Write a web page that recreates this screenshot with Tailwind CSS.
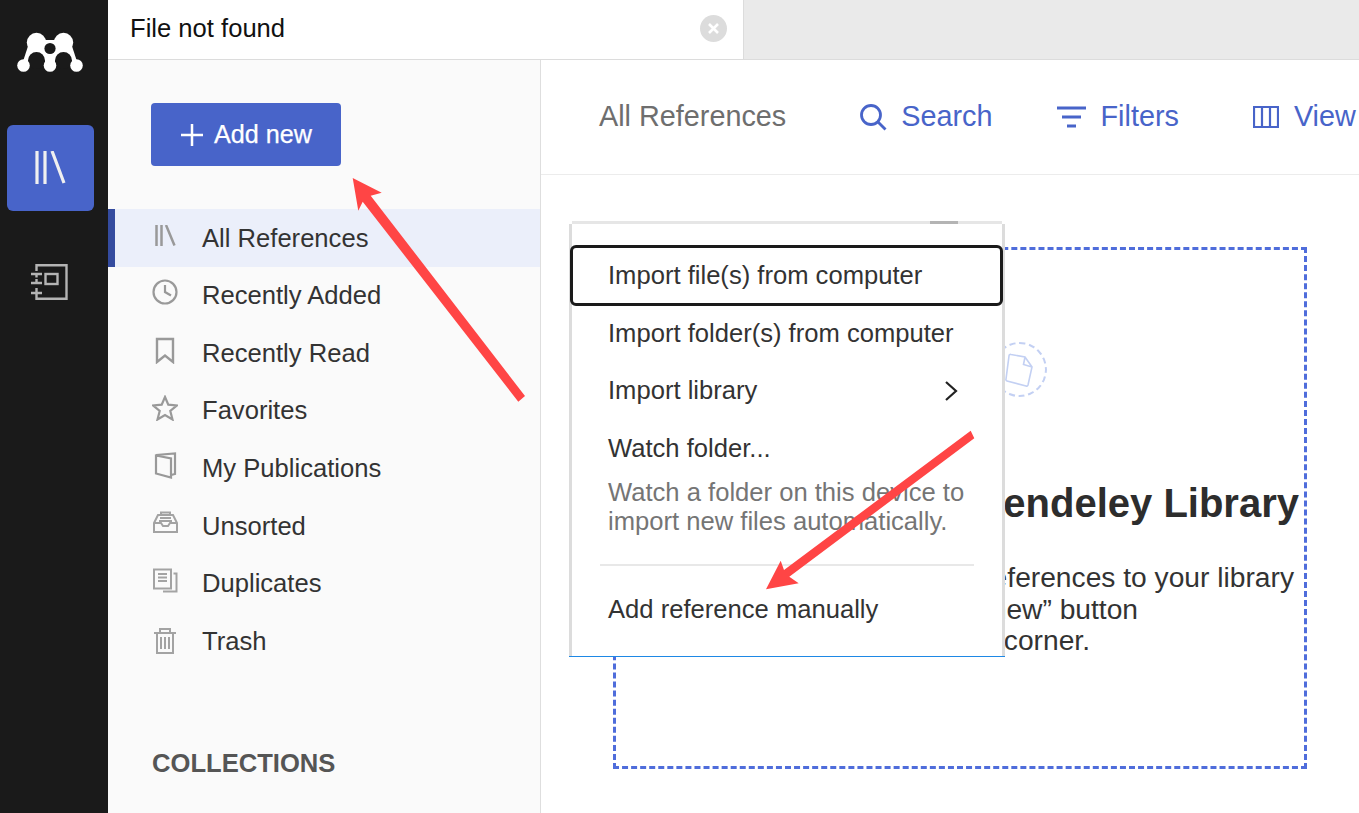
<!DOCTYPE html>
<html lang="en">
<head>
    <meta charset="UTF-8">
    <title>Mendeley Library</title>
    <script src="https://cdn.jsdelivr.net/npm/@tailwindcss/browser@4"></script>
</head>
<body class="h-[813px] w-[1359px] overflow-hidden bg-white font-['Liberation_Sans',Arial,sans-serif] text-[#333]">
<div class="relative flex h-[813px] w-[1359px] overflow-hidden">

    <!-- app rail -->
    <nav class="flex w-[108px] shrink-0 flex-col bg-[#1a1a1a]">
        <svg class="ml-[15px] mt-[30px] h-[46px] w-[70px]" viewBox="15 30 70 46" fill="#fff">
            <circle cx="36.500" cy="42.500" r="9.700"/><circle cx="63.500" cy="42.500" r="9.700"/>
            <path d="M30 40H70L77.500 63H22.500z"/>
            <circle cx="36.500" cy="60.500" r="8.500" fill="#1a1a1a"/><circle cx="63.500" cy="60.500" r="8.500" fill="#1a1a1a"/>
            <path d="M28 60.500h17v4H28zM55 60.500h17v4H55z" fill="#1a1a1a"/>
            <circle cx="23.500" cy="65.500" r="6.300"/><circle cx="50" cy="65.500" r="6.300"/><circle cx="76.500" cy="65.500" r="6.300"/>
            <circle cx="50" cy="48.500" r="5.600" fill="#1a1a1a"/>
        </svg>
        <div class="ml-[7px] mt-[49px] flex h-[86px] w-[87px] items-center justify-center rounded-[6px] bg-[#4864c9]">
            <svg class="h-[34px] w-[32px]" viewBox="0 0 32 34" fill="none" stroke="#f0f0f0" stroke-width="3.200"><path d="M2 0v33M10 0v33M17 0l12 32"/></svg>
        </div>
        <svg class="ml-[31px] mt-[53px] h-[36px] w-[37px]" viewBox="0 0 37 36" fill="none" stroke="#b4b4b4" stroke-width="2.400">
            <path d="M5.500 7V1.200H35.500V34.800H5.500V30"/><path d="M0 10h11M0 19h11M0 29h11M5.500 10v3.500M5.500 15v4M5.500 24v5"/><rect x="14.500" y="10" width="12" height="10"/>
        </svg>
    </nav>

    <div class="flex min-w-0 flex-1 flex-col">
        <!-- tab bar -->
        <div class="flex h-[60px] shrink-0 border-b border-[#dcdcdc] bg-[#eaeaea]">
            <div class="flex w-[636px] items-center justify-between border-r border-[#dcdcdc] bg-white pb-[2px] pl-[22px] pr-[16px]">
                <span class="text-[25.600px] text-[#111]">File not found</span>
                <span class="flex h-[27px] w-[27px] items-center justify-center rounded-full bg-[#dcdcdc]">
                    <svg class="h-[11px] w-[11px]" viewBox="0 0 11 11" stroke="#fff" stroke-width="2.600"><path d="M1 1l9 9M10 1l-9 9"/></svg>
                </span>
            </div>
        </div>

        <div class="flex min-h-0 flex-1">
            <!-- sidebar -->
            <aside class="w-[433px] shrink-0 border-r border-[#dedede] bg-[#fafafa]">
                <button class="ml-[43px] mt-[43px] flex h-[63px] w-[190px] items-center justify-center gap-[10px] rounded-[4px] bg-[#4864c9] text-[25.200px] text-white [-webkit-text-stroke:0.25px_#fff]">
                    <svg class="h-[24px] w-[24px]" viewBox="0 0 24 24" stroke="#fff" stroke-width="2.500"><path d="M12 1v22M1 12h22"/></svg>
                    Add new
                </button>
                <ul class="mt-[43px] text-[25.600px] text-[#333]">
                    <li class="relative flex h-[58px] items-center border-l-[7px] border-[#344b9f] bg-[#ebeffa] pl-[87px] pt-[1px]">
                        <svg class="absolute left-[40px] top-[16px] h-[22px] w-[21px]" viewBox="0 0 21 22" fill="none" stroke="#999" stroke-width="2.500"><path d="M1.500 0v21M6.500 0v21M11 0l8.500 20.500"/></svg>
                        All References</li>
                    <li class="relative flex h-[57.600px] items-center pb-[0.400px] pl-[94px]">
                        <svg class="absolute left-[44px] top-[12px] h-[26px] w-[26px]" viewBox="0 0 26 26" fill="none" stroke="#999" stroke-width="2.200"><circle cx="13" cy="13" r="11.500"/><path d="M13 6v7l6 3.500"/></svg>
                        Recently Added</li>
                    <li class="relative flex h-[57.600px] items-center pb-[0.400px] pl-[94px]">
                        <svg class="absolute left-[47px] top-[12px] h-[27px] w-[20px]" viewBox="0 0 20 27" fill="none" stroke="#999" stroke-width="2.400"><path d="M2 2h16v23l-8-6.500L2 25z"/></svg>
                        Recently Read</li>
                    <li class="relative flex h-[57.600px] items-center pb-[1.400px] pl-[94px]">
                        <svg class="absolute left-[44px] top-[13px] h-[26px] w-[26px]" viewBox="0 0 26 26" fill="none" stroke="#999" stroke-width="2.200"><path d="M13 2l3.300 7.700 8.700.7-6.700 5.500 2.200 8.600L13 20l-7.500 4.500 2.200-8.600L1 10.400l8.700-.7z"/></svg>
                        Favorites</li>
                    <li class="relative flex h-[57.600px] items-center pb-[0.400px] pl-[94px]">
                        <svg class="absolute left-[46px] top-[12px] h-[27px] w-[23px]" viewBox="0 0 23 27" fill="none" stroke="#999" stroke-width="2.200"><path d="M2 3l19-1.500V22l-4 1"/><path d="M2 3.500l15 3V25.500L2 21.500z"/></svg>
                        My Publications</li>
                    <li class="relative flex h-[57.600px] items-center pb-[0.400px] pl-[94px]">
                        <svg class="absolute left-[45px] top-[12px] h-[26px] w-[25px]" viewBox="0 0 25 26" fill="none" stroke="#a3a3a3" stroke-width="2"><path d="M1 14l4-8h15l4 8v9H1z"/><path d="M1 14h7l2 3h5l2-3h7"/><path d="M8 5V3.500h9V5M7 9h11M6 12h13"/></svg>
                        Unsorted</li>
                    <li class="relative flex h-[57.600px] items-center pb-[0.400px] pl-[94px]">
                        <svg class="absolute left-[45px] top-[12px] h-[26px] w-[25px]" viewBox="0 0 25 26" fill="none" stroke="#a3a3a3" stroke-width="2"><path d="M1 2.500h17v19H1z"/><path d="M20.500 6.500h3v18H10"/><path d="M5 7h9M5 10.500h9M5 14h9"/></svg>
                        Duplicates</li>
                    <li class="relative flex h-[57.600px] items-center pb-[0.400px] pl-[94px]">
                        <svg class="absolute left-[46px] top-[15px] h-[26px] w-[22px]" viewBox="0 0 22 26" fill="none" stroke="#a3a3a3" stroke-width="2"><path d="M0 5h22M6 5V1h10v4M3 5v20h16V5M7 9v12M11 9v12M15 9v12"/></svg>
                        Trash</li>
                </ul>
                <h3 class="ml-[44px] mt-[78px] text-[25.600px] font-bold leading-[30px] text-[#555]">COLLECTIONS</h3>
            </aside>

            <!-- main -->
            <main class="relative min-w-0 flex-1 bg-white">
                <header class="flex h-[115px] items-center whitespace-nowrap border-b border-[#ececec] pl-[58px] text-[28.800px] text-[#4864c9]">
                    <span class="mr-[73px] text-[#6e6e6e]">All References</span>
                    <svg class="mr-[14px] h-[28px] w-[28px] shrink-0" viewBox="0 0 28 28" fill="none" stroke="#4864c9" stroke-width="2.800"><circle cx="12" cy="12" r="9.500"/><path d="M19 19l7.500 7.500"/></svg>
                    <span class="mr-[64px]">Search</span>
                    <svg class="mr-[15px] h-[22px] w-[29px] shrink-0" viewBox="0 0 29 22" fill="none" stroke="#4864c9" stroke-width="2.800"><path d="M0 2h29M5 11h19M10 20h9"/></svg>
                    <span class="mr-[74px]">Filters</span>
                    <svg class="mr-[15px] h-[22px] w-[26px] shrink-0" viewBox="0 0 26 22" fill="none" stroke="#4864c9" stroke-width="2.200"><path d="M1 1h24v20H1zM9 1v20M17 1v20"/></svg>
                    <span>View</span>
                </header>

                <!-- empty library drop box -->
                <section class="ml-[72px] mt-[72px] h-[522px] w-[694px] border-[3px] border-dashed border-[#4f6ddb] text-right">
                    <div class="relative mt-[92px] h-[56px]">
                        <div class="absolute left-[376px] top-0 h-[55px] w-[55px] rounded-full border-2 border-dashed border-[#c3d0f3]"></div>
                    </div>
                    <h2 class="mr-[5px] mt-[82px] text-[40px] font-bold leading-[46px] text-[#2d2d2d]">Mendeley Library</h2>
                    <p class="mt-[36px] text-[28.200px] leading-[31.500px] text-[#333]">
                        <span class="mr-[10px] block">references to your library</span>
                        <span class="mr-[166px] block">“Add new” button</span>
                        <span class="mr-[214px] block">corner.</span>
                    </p>
                </section>

                <!-- import menu -->
                <div class="absolute left-[28px] top-[164px] h-[432px] w-[436px] border-x-[3px] border-x-[#dcdcdc] bg-white text-[25.600px] text-[#333]">
                    <div class="absolute -top-[3px] left-0 right-0 h-[3px] bg-[#e6e6e6]"></div>
                    <div class="absolute -top-[3px] left-[358px] h-[3px] w-[28px] bg-[#b4b4b4]"></div>
                    <div class="absolute -bottom-px -left-[3px] -right-[3px] h-px bg-[#1e88e5]"></div>
                    <div class="absolute -left-[2px] top-[21px] flex h-[61px] w-[433px] items-center rounded-[6px] border-[3px] border-[#1a1a1a] bg-white pl-[35px]">Import file(s) from computer</div>
                    <div class="mt-[81px] flex h-[57px] items-center pl-[36px]">Import folder(s) from computer</div>
                    <div class="flex h-[57px] items-center justify-between pl-[36px] pr-[44px]">Import library
                        <svg class="h-[22px] w-[14px]" viewBox="0 0 14 22" fill="none" stroke="#222" stroke-width="2.200"><path d="M2 2l10 9-10 9"/></svg>
                    </div>
                    <div class="flex h-[58px] items-center pl-[36px]">Watch folder...</div>
                    <p class="mt-px pl-[36px] leading-[29px] text-[#757575]">Watch a folder on this device to<br>import new files automatically.</p>
                    <div class="mx-[28px] mt-[28px] h-[2px] bg-[#e8e8e8]"></div>
                    <div class="mt-[14px] flex h-[58px] items-center pl-[36px]">Add reference manually</div>
                </div>
            </main>
        </div>
    </div>

    <!-- doc icon inside the dashed circle -->
    <svg class="absolute left-[1003px] top-[352px] h-[36px] w-[32px]" viewBox="0 0 32 36" fill="none" stroke="#c3d0f3" stroke-width="1.600"><path d="M8 2.500l14 2.500 7 10-4 18a1.500 1.500 0 0 1-2 1L4 29a1.500 1.500 0 0 1-1-2L6 4a1.500 1.500 0 0 1 2-1.500zM22 5l-1.500 7.500 8.500 2.500"/></svg>

    <!-- red annotation arrows -->
    <svg class="pointer-events-none absolute inset-0 h-[813px] w-[1359px]" viewBox="0 0 1359 813" fill="#ff4545">
        <path d="M352.700 178L381.700 192.700 370.700 195.700 525 396 518.300 401.700 362.700 201.700 358.300 210.700z"/>
        <path d="M766 589.300L780.700 560.700 784 570 970.700 430.700 974.300 438.300 789.300 576.700 798.700 583.300z"/>
    </svg>
</div>
</body>
</html>
